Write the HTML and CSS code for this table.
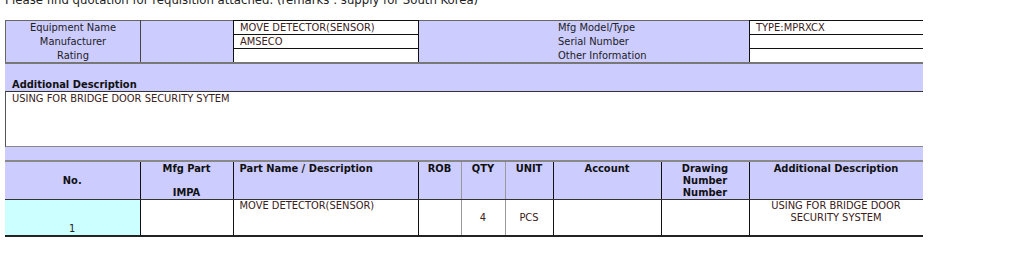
FILE: index.html
```html
<!DOCTYPE html>
<html>
<head>
<meta charset="utf-8">
<link rel="stylesheet" href="styles.css">
</head>
<body>
<p class="intro">Please find quotation for requisition attached. (remarks : supply for South Korea)</p>

<table class="equip">
  <colgroup>
    <col class="c1"><col class="c2"><col class="c3"><col class="c4"><col class="c5">
  </colgroup>
  <tr>
    <td class="lbl">Equipment Name</td>
    <td class="blank" rowspan="3"></td>
    <td class="val">MOVE DETECTOR(SENSOR)</td>
    <td class="lbl2">Mfg Model/Type</td>
    <td class="val">TYPE:MPRXCX</td>
  </tr>
  <tr>
    <td class="lbl">Manufacturer</td>
    <td class="val">AMSECO</td>
    <td class="lbl2">Serial Number</td>
    <td class="val"></td>
  </tr>
  <tr>
    <td class="lbl">Rating</td>
    <td class="val"></td>
    <td class="lbl2">Other Information</td>
    <td class="val"></td>
  </tr>
</table>

<div class="band band-desc"><span class="band-title">Additional Description</span></div>
<div class="descbox">USING FOR BRIDGE DOOR SECURITY SYTEM</div>
<div class="band band-gap"></div>

<table class="items">
  <colgroup>
    <col class="i1"><col class="i2"><col class="i3"><col class="i4"><col class="i5"><col class="i6"><col class="i7"><col class="i8"><col class="i9">
  </colgroup>
  <tr class="head">
    <th class="mid">No.</th>
    <th class="bk">Mfg Part<br><br>IMPA</th>
    <th class="left bk">Part Name / Description</th>
    <th class="bk">ROB</th>
    <th>QTY</th>
    <th>UNIT</th>
    <th class="bk">Account</th>
    <th class="bk">Drawing<br>Number<br>Number</th>
    <th class="bk">Additional Description</th>
  </tr>
  <tr class="row">
    <td class="no">1</td>
    <td class="bk"></td>
    <td class="left top bk">MOVE DETECTOR(SENSOR)</td>
    <td class="bk"></td>
    <td>4</td>
    <td>PCS</td>
    <td class="bk"></td>
    <td class="bk"></td>
    <td class="top bk">USING FOR BRIDGE DOOR<br>SECURITY SYSTEM</td>
  </tr>
</table>
</body>
</html>
```

FILE: styles.css
```css
html, body {
  margin: 0;
  padding: 0;
  background: #ffffff;
}
body {
  padding: 0 0 0 5px;
  width: 918px;
  font-family: "DejaVu Sans", Verdana, sans-serif;
  font-stretch: condensed;
  font-size: 11px;
  color: #2a2020;
  overflow: hidden;
}
.intro {
  margin: -9px 0 12px 0;
  font-size: 13px;
  line-height: 17px;
  color: #222222;
  white-space: nowrap;
}
table {
  border-collapse: collapse;
  table-layout: fixed;
  width: 918px;
}
.equip {
  background: #ccccff;
  border-top: 1px solid #666666;
  border-left: 1px solid #666666;
  border-right: 1px solid #222222;
  border-bottom: 2px solid #777777;
}
.c1 { width: 135px; }
.c2 { width: 93px; }
.c3 { width: 185px; }
.c4 { width: 331px; }
.c5 { width: 174px; }
.equip td {
  height: 13px;
  padding: 0;
  line-height: 13px;
  white-space: nowrap;
  overflow: hidden;
}
.equip .lbl {
  text-align: center;
  color: #222222;
  border-right: 1px solid #444444;
}
.equip .blank {
  border-right: 1px solid #111111;
}
.equip .val {
  background: #ffffff;
  border: 1px solid #111111;
  padding-left: 6px;
  color: #3a2020;
}
.equip .lbl2 {
  padding-left: 139px;
  color: #222222;
}
.band {
  background: #ccccff;
}
.band-desc {
  height: 27px;
  display: flex;
  align-items: flex-end;
  padding-left: 7px;
}
.band-title {
  font-weight: bold;
  color: #111111;
  line-height: 13px;
}
.descbox {
  border-top: 1px solid #333333;
  border-left: 1px solid #555555;
  border-bottom: 1px solid #888888;
  padding: 1px 0 0 6px;
  box-sizing: border-box;
  height: 56px;
  line-height: 11px;
  color: #3a2020;
}
.band-gap {
  height: 13px;
}
.items {
  border-top: 2px solid #888888;
  border-bottom: 2px solid #222222;
}
.i1 { width: 135px; }
.i2 { width: 93px; }
.i3 { width: 185px; }
.i4 { width: 43px; }
.i5 { width: 44px; }
.i6 { width: 48px; }
.i7 { width: 108px; }
.i8 { width: 88px; }
.i9 { width: 174px; }
.items th,
.items td {
  padding: 0 2px;
  text-align: center;
  border-left: 1px solid #999999;
  line-height: 12px;
}
.items .bk {
  border-left: 1px solid #111111;
}
.items th:last-child,
.items td:last-child {
  border-right: 1px solid #111111;
}
.items th:first-child,
.items td:first-child {
  border-left: none;
}
.head th {
  background: #ccccff;
  height: 36px;
  vertical-align: top;
  padding-top: 1px;
  font-weight: bold;
  color: #111111;
  border-bottom: 1px solid #333333;
}
.head th.mid {
  vertical-align: middle;
}
.items .left {
  text-align: left;
  padding-left: 6px;
}
.row td {
  height: 35px;
  vertical-align: middle;
  color: #3a2020;
}
.row td.top {
  vertical-align: top;
  padding-top: 0;
}
.row td.no {
  background: #ccffff;
  vertical-align: bottom;
  color: #222222;
}
```
